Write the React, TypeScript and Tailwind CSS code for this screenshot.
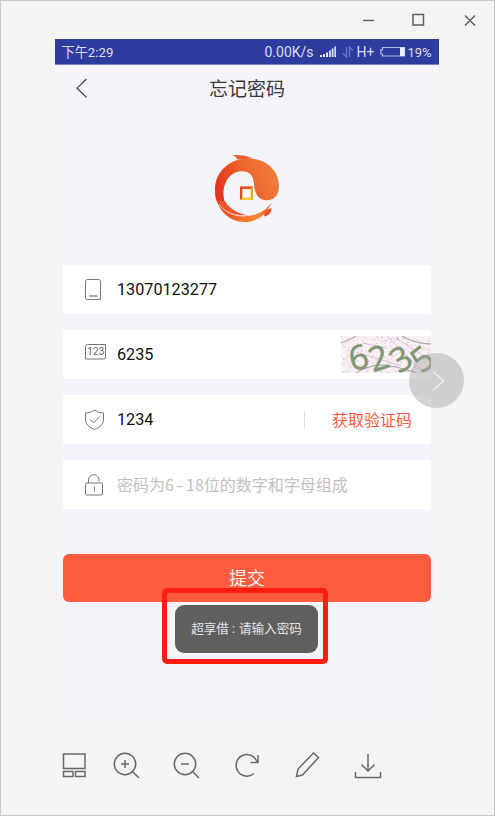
import type { ReactNode } from "react";

const sans = "font-[Roboto,'Noto_Sans_CJK_SC',sans-serif]";

function StatusBar() {
  return (
    <div className="flex h-[26px] shrink-0 items-center border-b border-[#7c84c4] bg-[#2e3c9e] pt-px pl-[6.500px] text-[13.200px] leading-none text-[#d9def6]">
      <span className="w-[203px] pt-px whitespace-nowrap">下午2:29</span>
      <span className="w-[55px] text-[14px]">0.00K/s</span>
      <svg className="h-[12px] w-[17px] shrink-0" viewBox="0 0 17 12" fill="#dfe3fa">
        <path d="M0 9h2v2H0zM3 8h2v3H3zM6 6.5h2V11H6zM9 4.500h1.800V11H9zM11.700 2.500h1.800V11h-1.800zM14.400.5H16V11h-1.600z" />
      </svg>
      <svg className="ml-[5px] h-[12px] w-[12px] shrink-0" viewBox="0 0 12 12" fill="none" stroke="#6c78c2" strokeWidth="1.300">
        <path d="M4.500 1v10L1 7.500M7.500 11V1L11 4.500" />
      </svg>
      <span className="ml-[3px] w-[22px] text-[14px]">H+</span>
      <svg className="h-[12px] w-[27px] shrink-0" viewBox="0 0 27 12" fill="none" stroke="#aeb6e6" strokeWidth="1.200">
        <path d="M3.500 1.500h22v8.500h-22V8H1.800V3.800h1.700z" />
        <path d="M21 1.500h4.500V10H21z" fill="#edf0ff" stroke="none" />
      </svg>
      <span className="ml-[2px] text-[13px]">19%</span>
    </div>
  );
}

function Logo() {
  return (
    <svg className="mx-auto mt-[39px] h-[72px] w-[70px] shrink-0" viewBox="212 152 70 72">
      <defs>
        <linearGradient id="body" x1="0" x2="1" y1="0.4" y2="0">
          <stop offset="0" stopColor="#e5341f" />
          <stop offset="0.4" stopColor="#ed6227" />
          <stop offset="1" stopColor="#ef8543" />
        </linearGradient>
        <linearGradient id="tail" x1="0" x2="1">
          <stop offset="0" stopColor="#ea4020" />
          <stop offset="0.7" stopColor="#f6872e" />
          <stop offset="1" stopColor="#ee6a2c" />
        </linearGradient>
      </defs>
      <path d="M232.300 155C239 154.500 247 155.500 253 158.500L237 159.500Q236.500 156.500 232.300 155Z" fill="#ed5a2b" />
      <path d="M217 202C215.500 198 215 194 215 190C215 171 230 158.500 248 158.500C267 158.500 279 171 279 186C279 195 274 200.300 267 200.300C258 200.300 254.500 193 254 184C253.500 176 250 171.300 242 171.300C231 171.300 223.500 181 223.500 194C223.500 202 226.500 207.500 232 211C225 210 220 207 217 202Z" fill="url(#body)" />
      <path d="M215.200 194C218 206 228 214.500 242 216C255 217 266 211 271.500 202.500C266 216 256 222 244.500 222C229 222 217.500 210 215.200 194Z" fill="url(#tail)" />
      <path d="M217 201C222 210 233 216 249 215.500C238 213.500 229 209 225 201Z" fill="#ee5226" />
      <path d="M218.500 204C224 211.500 233 216 245 216.300" fill="none" stroke="#fff3ee" strokeWidth="0.700" />
      <path d="M264.500 216.500C263 213 266 209.500 271.500 208C271.800 212 269 215.500 264.500 216.500Z" fill="#e9542c" />
      <path d="M240 186.500h13v13.500h-13z" fill="#f4cf2d" />
      <path d="M240 186.500h13l-2.500 2.500h-8v8.500l-2.500 2.500z" fill="#e8492b" />
      <path d="M250.500 189l2.500-2.500v13.500l-2.500-2.500z" fill="#f4a42b" />
      <path d="M242.500 189h8v8.500h-8z" fill="#fffdf7" />
    </svg>
  );
}

function LineIcon({ children }: { children: ReactNode }) {
  return (
    <svg className="h-[24px] w-[24px] shrink-0" viewBox="0 0 24 24" fill="none" stroke="#777" strokeWidth="1">
      {children}
    </svg>
  );
}

function Row({ icon, children }: { icon: ReactNode; children: ReactNode }) {
  return (
    <div className="flex h-[49px] shrink-0 items-center bg-white pl-[20px]">
      <LineIcon>{icon}</LineIcon>
      <div className="ml-[10px] flex h-full min-w-0 flex-1 items-center pt-[2px] text-[16.200px] text-[#111]">{children}</div>
    </div>
  );
}

const noise = Array.from({ length: 300 }, (_, i) => {
  const r = Math.abs(Math.sin(i * 12.9898) * 43758.5453);
  const s = Math.abs(Math.sin(i * 78.233) * 24634.6345);
  return {
    x: (r % 1) * 89,
    y: (s % 1) * 36,
    c: ["#b58bb9", "#a5bd9a", "#e2b0c0", "#a4a0d0", "#d8b89c"][i % 5],
  };
});

function Captcha() {
  return (
    <svg className="-mt-[2px] ml-auto h-[37px] w-[90px] shrink-0" viewBox="0 0 90 37">
      <path d="M0 0h90v37H0z" fill="#fbf0f3" />
      {noise.map((n, i) => (
        <rect key={i} x={n.x} y={n.y} width="1" height="1" fill={n.c} opacity="0.6" />
      ))}
      <g fill="none" strokeWidth="0.700">
        <path d="M22 7L45 12M15 16L60 30M46 0L82 36M58 4L89 24" stroke="#c5add0" />
        <path d="M15 37Q33 25 55 31T75 37M61 0Q75 8 90 8M0 7Q9 4 15 0" stroke="#817a84" />
      </g>
      <g fill="#7f9775" stroke="#7f9775" strokeWidth="0.300" className="font-['Noto_Sans',sans-serif] text-[34px]" textAnchor="middle">
        <text transform="translate(17.500 21.500) rotate(-14)" y="12">6</text>
        <text transform="translate(37.500 22) rotate(-18)" y="12">2</text>
        <text transform="translate(60 23) rotate(-32)" y="12">3</text>
        <text transform="translate(81 23) rotate(-36)" y="12">5</text>
      </g>
    </svg>
  );
}

function Tool({ children }: { children: ReactNode }) {
  return (
    <svg className="h-[30px] w-[30px] shrink-0" viewBox="0 0 30 30" fill="none" stroke="#686868" strokeWidth="1.500">
      {children}
    </svg>
  );
}

export default function App() {
  return (
    <div className={`relative flex h-[816px] w-[495px] flex-col overflow-hidden border border-[#c9c9c9] bg-[#f4f4f4] ${sans}`}>
      <div className="flex h-[38px] shrink-0 items-center justify-end pr-[16px]">
        <svg className="h-[16px] w-[116px]" viewBox="0 0 116 16" fill="none" stroke="#606060" strokeWidth="1.500">
          <path d="M1 8.500h11M51 2.500h10.500V13H51zM103 3.500l10 10M113 3.500l-10 10" />
        </svg>
      </div>
      <main className="ml-[54px] flex h-[681px] w-[384px] shrink-0 flex-col bg-[#f5f4fa]">
        <StatusBar />
        <header className="flex h-[48px] shrink-0 items-center pl-[20px]">
          <svg className="-mt-[3px] h-[22px] w-[14px]" viewBox="0 0 14 22" fill="none" stroke="#333" strokeWidth="1.100">
            <path d="M11.500 2L2 11.200l9.500 9.200" />
          </svg>
          <h1 className="ml-[120px] pt-px text-[19px] leading-none text-[#3a3a3a]">忘记密码</h1>
        </header>
        <Logo />
        <form className="mt-[41px] flex flex-col gap-[16px] px-[8px]">
          <Row
            icon={
              <>
                <path d="M4.500 1.500h11q2 0 2 2v18h-13q-2 0-2-2v-16q0-2 2-2z" />
                <path d="M6.500 18h8" strokeWidth="1.300" />
              </>
            }
          >
            13070123277
          </Row>
          <Row
            icon={
              <>
                <path d="M4.500 1.500h18v12.500q0 2-2 2h-18v-12.500q0-2 2-2z" />
                <text x="4.300" y="12.300" fill="#666" stroke="none" className="text-[10px]" textLength="17">123</text>
              </>
            }
          >
            6235
            <Captcha />
          </Row>
          <Row
            icon={
              <>
                <path d="M11.500 2Q15 5 20.500 5V12q0 6-9 9.500Q2.500 18 2.500 12V5Q8 5 11.500 2z" />
                <path d="M7 11.500l3.500 3.500 6-6.500" />
              </>
            }
          >
            1234
            <span className="-mt-[2px] ml-auto h-[17px] w-px bg-[#ddd]" />
            <button type="button" className="mr-[19px] ml-[26.500px] text-[16px] whitespace-nowrap text-[#ff5a42]">获取验证码</button>
          </Row>
          <Row
            icon={
              <>
                <rect x="2.500" y="10" width="17" height="12" rx="1" />
                <path d="M5.500 10V7a5.300 5.300 0 0 1 10.600 0v1.500M11.500 13.500v5" />
              </>
            }
          >
            <span className="-mt-[4px] text-[16px] whitespace-nowrap text-[#c0c0c5] font-['Noto_Sans_CJK_SC',sans-serif]">
              密码为<span className="tracking-[0.200px]">6</span>
              <span className="inline-block w-[12px] origin-left scale-x-150 pl-[1px]">-</span>18位的数字和字母组成
            </span>
          </Row>
        </form>
        <button type="button" className="mx-[8px] mt-[45px] h-[48px] shrink-0 rounded-[6px] bg-[#ff5b3f] text-[18px] text-[#fff4f0]">
          提交
        </button>
      </main>
      <div className="flex h-[90px] shrink-0 items-center pl-[58px]">
        <Tool>
          <path d="M4.500 4H26v14.500H4.500zM4.500 21.500H14v5H4.500zM16.500 21.500H26v5h-9.500z" />
        </Tool>
        <div className="ml-[22px] flex">
          <Tool>
            <circle cx="14" cy="14" r="10.700" />
            <path d="M21.500 21.500l6.500 6.500M10 14h8M14 10v8" />
          </Tool>
        </div>
        <div className="ml-[30px] flex">
          <Tool>
            <circle cx="14" cy="14" r="10.700" />
            <path d="M21.500 21.500l6.500 6.500M10 14h8" />
          </Tool>
        </div>
        <div className="ml-[31px] flex">
          <Tool>
            <path d="M22 23.500A10.800 10.800 0 1 1 25 11.500M26 5v7.500h-7.500" />
          </Tool>
        </div>
        <div className="ml-[30px] flex">
          <Tool>
            <path d="M4.500 26.500l1.500-7.500L21.500 3l5 4.500L10.500 25z" />
          </Tool>
        </div>
        <div className="ml-[31px] flex">
          <Tool>
            <path d="M15 4v17M8.500 14.500L15 21l6.500-6.500M2.500 22v5.500h25V22" />
          </Tool>
        </div>
      </div>
      <div className="absolute top-[352px] left-[408px] flex h-[55px] w-[55px] items-center justify-center rounded-full bg-[#a9a9a9]/50">
        <svg className="ml-[2px] h-[22px] w-[14px]" viewBox="0 0 14 22" fill="none" stroke="#eee" strokeWidth="1.500">
          <path d="M2 1.500L12.500 11 2 20.500" />
        </svg>
      </div>
      <div className="absolute top-[587px] left-[161px] flex h-[76px] w-[166px] items-center justify-center rounded-[5px] border-[5px] border-[#ff1d12]">
        <div className="mt-[5px] ml-[3px] flex h-[48px] w-[143px] shrink-0 items-center justify-center rounded-[9px] bg-[#5f5f5f] pt-[2px] text-[12.600px] whitespace-nowrap text-[#e4e4e4]">
          超享借<span className="w-[10px] pl-[3px]">:</span>请输入密码
        </div>
      </div>
    </div>
  );
}
